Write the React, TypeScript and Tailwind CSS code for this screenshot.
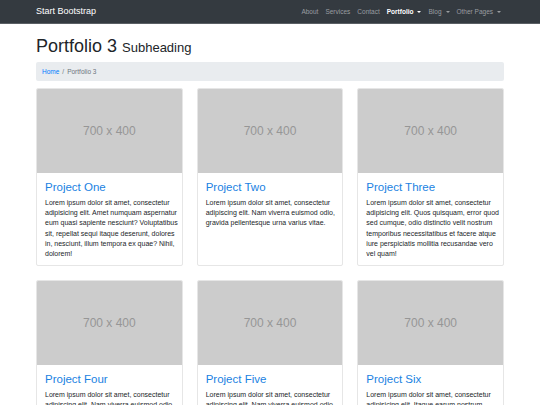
import React from 'react';

const PROJECTS = [
    { title: 'Project One', text: 'Lorem ipsum dolor sit amet, consectetur adipisicing elit. Amet numquam aspernatur eum quasi sapiente nesciunt? Voluptatibus sit, repellat sequi itaque deserunt, dolores in, nesciunt, illum tempora ex quae? Nihil, dolorem!' },
    { title: 'Project Two', text: 'Lorem ipsum dolor sit amet, consectetur adipiscing elit. Nam viverra euismod odio, gravida pellentesque urna varius vitae.' },
    { title: 'Project Three', text: 'Lorem ipsum dolor sit amet, consectetur adipisicing elit. Quos quisquam, error quod sed cumque, odio distinctio velit nostrum temporibus necessitatibus et facere atque iure perspiciatis mollitia recusandae vero vel quam!' },
    { title: 'Project Four', text: 'Lorem ipsum dolor sit amet, consectetur adipiscing elit. Nam viverra euismod odio, gravida pellentesque urna varius vitae.' },
    { title: 'Project Five', text: 'Lorem ipsum dolor sit amet, consectetur adipiscing elit. Nam viverra euismod odio, gravida pellentesque urna varius vitae.' },
    { title: 'Project Six', text: 'Lorem ipsum dolor sit amet, consectetur adipisicing elit. Itaque earum nostrum suscipit ducimus nihil provident, perferendis rem illo, voluptate atque, sit eius in voluptates, nemo repellat fugiat excepturi! Nemo, esse.' },
];

const Caret = () => (
    <span className="inline-block ml-[4px] align-middle w-0 h-0 border-l-[2px] border-r-[2px] border-t-[2px] border-l-transparent border-r-transparent border-t-current" />
);

const App: React.FC = () => {
    return (
        <div className="min-h-[405px] bg-white font-['Liberation_Sans',Arial,sans-serif] text-[#212529]">
            <nav className="h-[24px] bg-[#343a40] border-b border-[#5a5f64]">
                <div className="mx-[36px] h-full flex items-center justify-between">
                    <span className="text-white text-[9px]">Start Bootstrap</span>
                    <ul className="flex items-center gap-[7px] text-[6.5px] text-[#9a9da0] pr-[3px]">
                        <li>About</li>
                        <li>Services</li>
                        <li>Contact</li>
                        <li className="text-white font-bold">Portfolio<Caret /></li>
                        <li>Blog<Caret /></li>
                        <li>Other Pages<Caret /></li>
                    </ul>
                </div>
            </nav>

            <div className="mx-[36px]">
                <h1 className="mt-[11px] h-[22px] flex items-baseline gap-[5px] text-[18px] leading-[22px] text-[#212529]">
                    <span>Portfolio 3</span>
                    <span className="text-[13px] leading-none">Subheading</span>
                </h1>

                <ol className="mt-[5px] h-[19px] bg-[#e9ecef] rounded-[2px] px-[6px] flex items-center text-[6.5px] text-[#6c757d]">
                    <li className="text-[#007bff]">Home</li>
                    <li className="px-[3px]">/</li>
                    <li>Portfolio 3</li>
                </ol>

                <div className="mt-[7px] grid grid-cols-3 gap-x-[14px] gap-y-[14px]">
                    {PROJECTS.map((p) => (
                        <div key={p.title} className="h-[178px] flex flex-col border border-[#e6e6e6] rounded-[2px] overflow-hidden bg-white">
                            <div className="h-[84px] bg-[#cccccc] flex items-center justify-center text-[#969696] text-[12px]">
                                700 x 400
                            </div>
                            <div className="pl-[8px] pr-[3px] pt-[7px]">
                                <h4 className="text-[11.5px] leading-[14px] text-[#1a82e2] mb-[4px]">{p.title}</h4>
                                <p className="text-[7px] leading-[10.2px] text-[#212529]">{p.text}</p>
                            </div>
                        </div>
                    ))}
                </div>
            </div>
        </div>
    );
};

export default App;
